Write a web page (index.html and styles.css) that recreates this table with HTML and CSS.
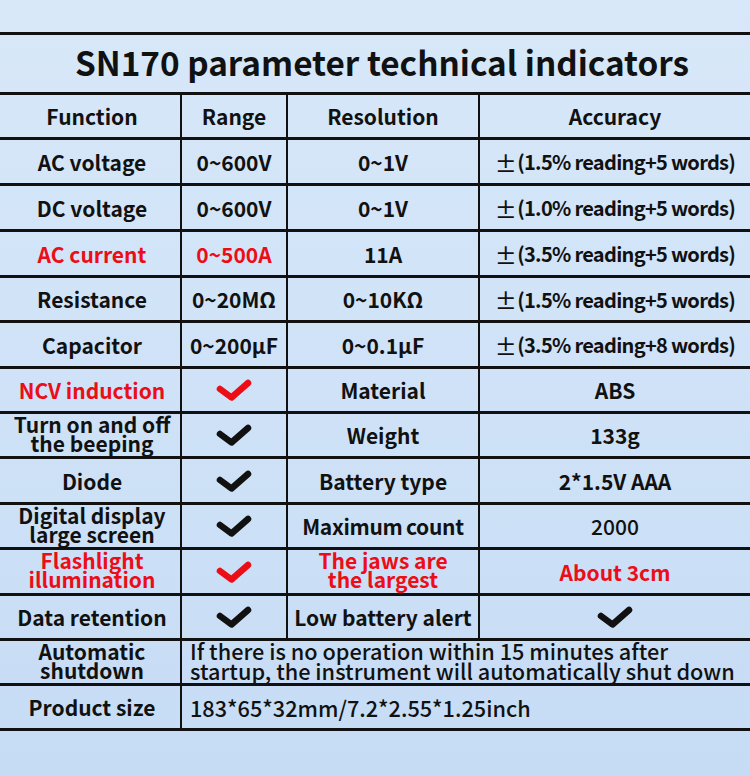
FILE: index.html
```html
<!DOCTYPE html>
<html>
<head>
<meta charset="utf-8">
<link rel="stylesheet" href="styles.css">
</head>
<body>
<div class="page">
  <div class="sheet">
    <div class="cell title">SN170 parameter technical indicators</div>

    <div class="cell head c1">Function</div>
    <div class="cell head">Range</div>
    <div class="cell head">Resolution</div>
    <div class="cell head">Accuracy</div>

    <div class="cell c1">AC voltage</div>
    <div class="cell">0~600V</div>
    <div class="cell">0~1V</div>
    <div class="cell acc"><span class="pm">±</span>(1.5% reading+5 words)</div>

    <div class="cell c1">DC voltage</div>
    <div class="cell">0~600V</div>
    <div class="cell">0~1V</div>
    <div class="cell acc"><span class="pm">±</span>(1.0% reading+5 words)</div>

    <div class="cell c1 red">AC current</div>
    <div class="cell red">0~500A</div>
    <div class="cell">11A</div>
    <div class="cell acc"><span class="pm">±</span>(3.5% reading+5 words)</div>

    <div class="cell c1">Resistance</div>
    <div class="cell">0~20MΩ</div>
    <div class="cell">0~10KΩ</div>
    <div class="cell acc"><span class="pm">±</span>(1.5% reading+5 words)</div>

    <div class="cell c1">Capacitor</div>
    <div class="cell">0~200μF</div>
    <div class="cell">0~0.1μF</div>
    <div class="cell acc"><span class="pm">±</span>(3.5% reading+8 words)</div>

    <div class="cell c1 red">NCV induction</div>
    <div class="cell"><svg class="check red-check" viewBox="0 0 36 24"><path d="M4 11 L15.5 19.5 L32 5"/></svg></div>
    <div class="cell">Material</div>
    <div class="cell">ABS</div>

    <div class="cell c1 two">Turn on and off<br>the beeping</div>
    <div class="cell"><svg class="check" viewBox="0 0 36 24"><path d="M4 11 L15.5 19.5 L32 5"/></svg></div>
    <div class="cell">Weight</div>
    <div class="cell">133g</div>

    <div class="cell c1">Diode</div>
    <div class="cell"><svg class="check" viewBox="0 0 36 24"><path d="M4 11 L15.5 19.5 L32 5"/></svg></div>
    <div class="cell">Battery type</div>
    <div class="cell">2*1.5V AAA</div>

    <div class="cell c1 two">Digital display<br>large screen</div>
    <div class="cell"><svg class="check" viewBox="0 0 36 24"><path d="M4 11 L15.5 19.5 L32 5"/></svg></div>
    <div class="cell tight">Maximum count</div>
    <div class="cell light">2000</div>

    <div class="cell c1 two red">Flashlight<br>illumination</div>
    <div class="cell"><svg class="check red-check" viewBox="0 0 36 24"><path d="M4 11 L15.5 19.5 L32 5"/></svg></div>
    <div class="cell two red">The jaws are<br>the largest</div>
    <div class="cell red">About 3cm</div>

    <div class="cell c1">Data retention</div>
    <div class="cell"><svg class="check" viewBox="0 0 36 24"><path d="M4 11 L15.5 19.5 L32 5"/></svg></div>
    <div class="cell">Low battery alert</div>
    <div class="cell"><svg class="check" viewBox="0 0 36 24"><path d="M4 11 L15.5 19.5 L32 5"/></svg></div>

    <div class="cell c1 two">Automatic<br>shutdown</div>
    <div class="cell wide two note">If there is no operation within 15 minutes after<br>startup, the instrument will automatically shut down</div>

    <div class="cell c1">Product size</div>
    <div class="cell wide note">183*65*32mm/7.2*2.55*1.25inch</div>
  </div>
</div>
</body>
</html>
```

FILE: styles.css
```css
html, body {
  margin: 0;
  padding: 0;
}
body {
  width: 750px;
  height: 776px;
  overflow: hidden;
  background: linear-gradient(180deg, #d8e8f9 0%, #cfe2f7 50%, #c6dcf5 100%);
  font-family: "Noto Sans CJK SC", "Noto Sans", sans-serif;
  color: #111111;
}
.page {
  padding-top: 32px;
}
.sheet {
  display: grid;
  grid-template-columns: 180px 106px 192px 272px;
  grid-template-rows: 60px 45px 46px 46px 46px 45px 46px 45px 45px 46px 45px 46px 45px 45px 45px;
  border-top: 3px solid #111;
}
.cell {
  display: flex;
  align-items: center;
  justify-content: center;
  text-align: center;
  border-bottom: 3px solid #111;
  border-left: 2px solid #111;
  font-size: 21px;
  font-weight: 700;
  white-space: nowrap;
}
.c1 {
  border-left: none;
  padding-left: 4px;
}
.title {
  grid-column: 1 / 5;
  border-left: none;
  font-size: 33.3px;
  font-weight: 700;
  padding-left: 14px;
  padding-bottom: 4px;
}
.head {
  font-weight: 700;
  font-size: 21px;
}
.acc {
  font-size: 20px;
  letter-spacing: -0.7px;
}
.pm {
  font-size: 22px;
  font-weight: 500;
  margin-right: 1px;
}
.two {
  line-height: 0.9;
  font-size: 21px;
  padding-bottom: 3px;
}
.tight {
  letter-spacing: -0.3px;
  word-spacing: -1px;
}
.light {
  font-weight: 500;
}
.red {
  color: #ec0d16;
}
.wide {
  grid-column: 2 / 5;
  justify-content: flex-start;
  text-align: left;
  padding-left: 8px;
}
.note {
  font-size: 21.7px;
  font-weight: 500;
}
.check {
  width: 36px;
  height: 24px;
  fill: none;
  stroke: #111;
  stroke-width: 6.5;
  stroke-linecap: round;
  stroke-linejoin: round;
}
.check.red-check {
  stroke: #ec0d16;
}
```
